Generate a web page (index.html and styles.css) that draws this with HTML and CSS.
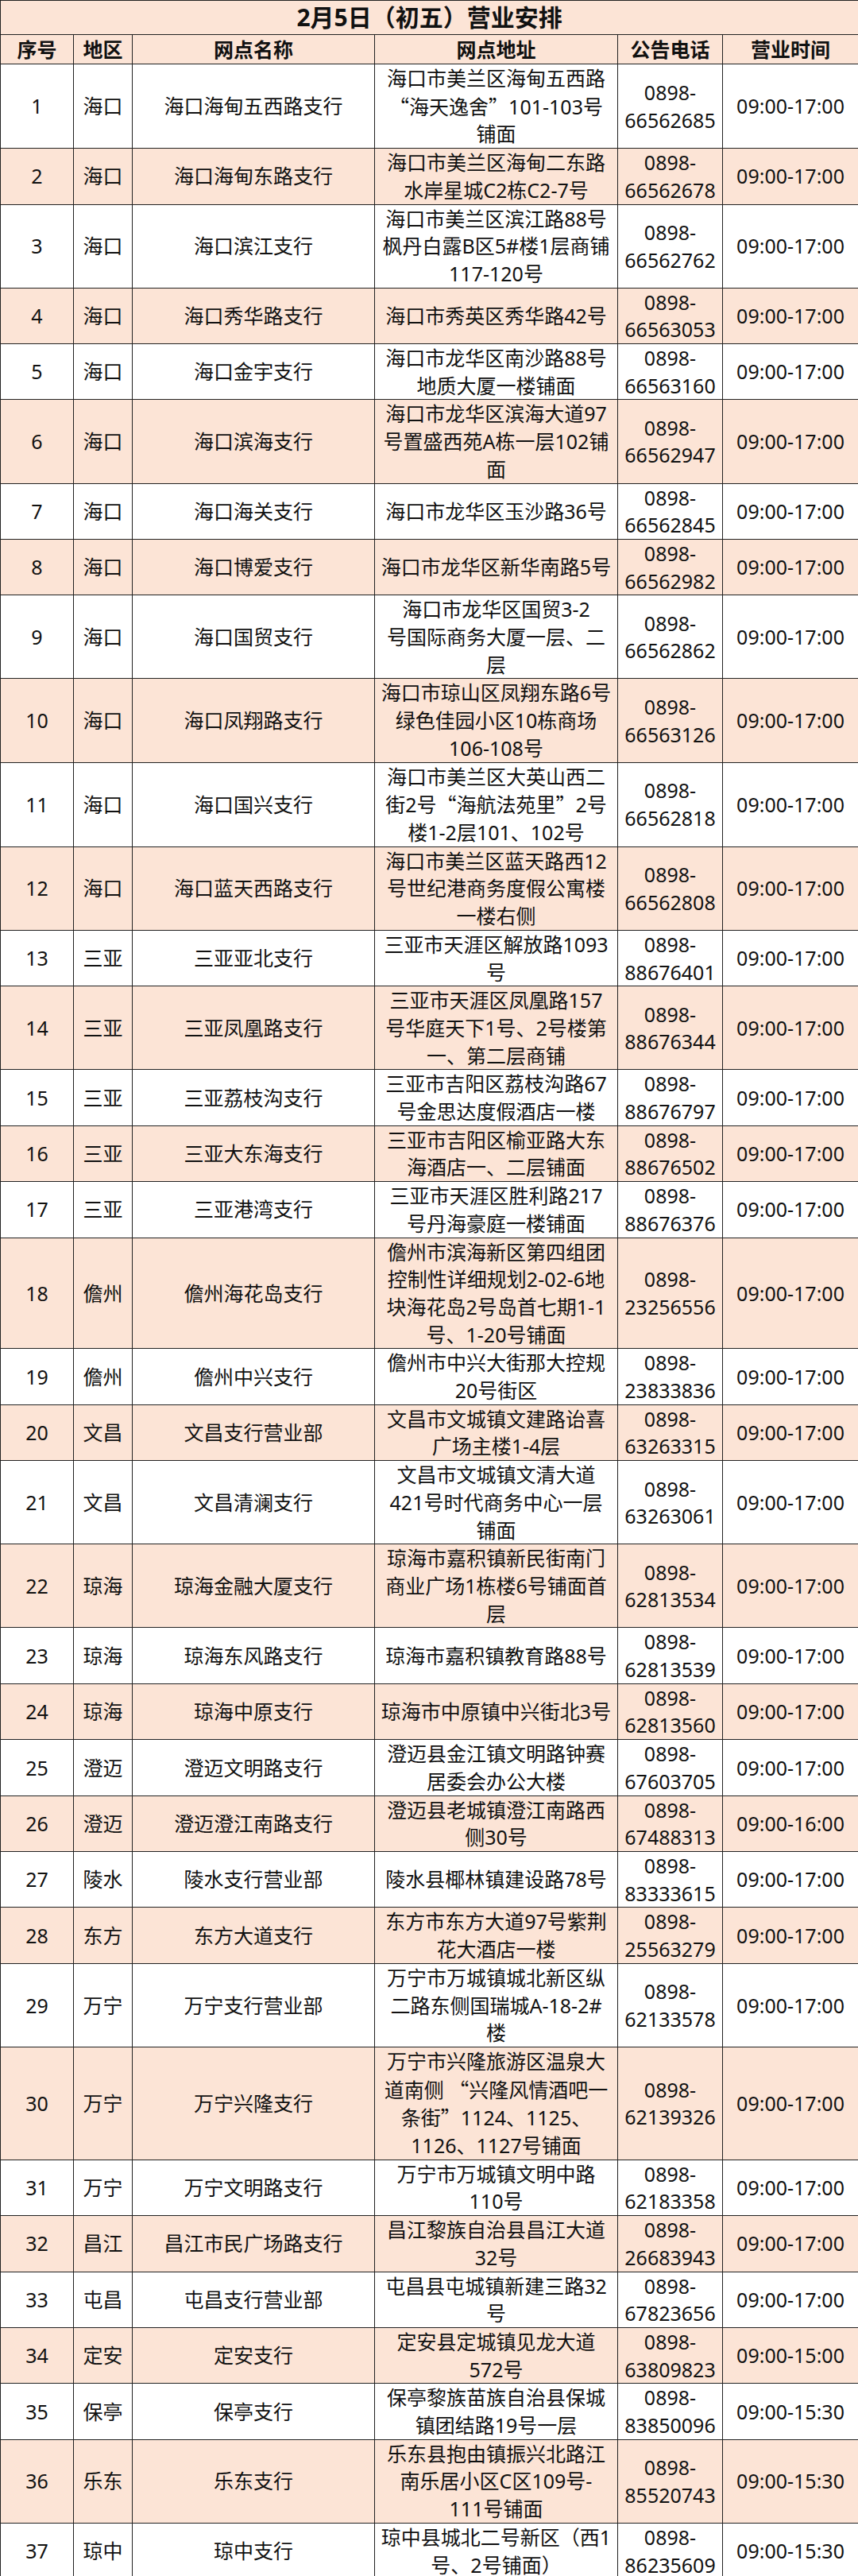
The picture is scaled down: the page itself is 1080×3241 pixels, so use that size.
FILE: index.html
```html
<!DOCTYPE html>
<html lang="zh-CN">
<head>
<meta charset="utf-8">
<title>2月5日（初五）营业安排</title>
<link rel="stylesheet" href="styles.css">
</head>
<body>
<table class="sched">
<colgroup>
<col class="c-no"><col class="c-area"><col class="c-name"><col class="c-addr"><col class="c-tel"><col class="c-time">
</colgroup>
<thead>
<tr class="title"><th colspan="6">2月5日（初五）营业安排</th></tr>
<tr class="head"><th>序号</th><th>地区</th><th>网点名称</th><th>网点地址</th><th>公告电话</th><th>营业时间</th></tr>
</thead>
<tbody>
<tr><td>1</td><td>海口</td><td>海口海甸五西路支行</td><td class="addr">海口市美兰区海甸五西路<br><span class="cjk">“</span>海天逸舍<span class="cjk">”</span>101-103号<br>铺面</td><td class="tel">0898-<br>66562685</td><td class="time">09:00-17:00</td></tr>
<tr class="alt"><td>2</td><td>海口</td><td>海口海甸东路支行</td><td class="addr">海口市美兰区海甸二东路<br>水岸星城C2栋C2-7号</td><td class="tel">0898-<br>66562678</td><td class="time">09:00-17:00</td></tr>
<tr><td>3</td><td>海口</td><td>海口滨江支行</td><td class="addr">海口市美兰区滨江路88号<br>枫丹白露B区5#楼1层商铺<br>117-120号</td><td class="tel">0898-<br>66562762</td><td class="time">09:00-17:00</td></tr>
<tr class="alt"><td>4</td><td>海口</td><td>海口秀华路支行</td><td class="addr">海口市秀英区秀华路42号</td><td class="tel">0898-<br>66563053</td><td class="time">09:00-17:00</td></tr>
<tr><td>5</td><td>海口</td><td>海口金宇支行</td><td class="addr">海口市龙华区南沙路88号<br>地质大厦一楼铺面</td><td class="tel">0898-<br>66563160</td><td class="time">09:00-17:00</td></tr>
<tr class="alt"><td>6</td><td>海口</td><td>海口滨海支行</td><td class="addr">海口市龙华区滨海大道97<br>号置盛西苑A栋一层102铺<br>面</td><td class="tel">0898-<br>66562947</td><td class="time">09:00-17:00</td></tr>
<tr><td>7</td><td>海口</td><td>海口海关支行</td><td class="addr">海口市龙华区玉沙路36号</td><td class="tel">0898-<br>66562845</td><td class="time">09:00-17:00</td></tr>
<tr class="alt"><td>8</td><td>海口</td><td>海口博爱支行</td><td class="addr">海口市龙华区新华南路5号</td><td class="tel">0898-<br>66562982</td><td class="time">09:00-17:00</td></tr>
<tr><td>9</td><td>海口</td><td>海口国贸支行</td><td class="addr">海口市龙华区国贸3-2<br>号国际商务大厦一层、二<br>层</td><td class="tel">0898-<br>66562862</td><td class="time">09:00-17:00</td></tr>
<tr class="alt"><td>10</td><td>海口</td><td>海口凤翔路支行</td><td class="addr">海口市琼山区凤翔东路6号<br>绿色佳园小区10栋商场<br>106-108号</td><td class="tel">0898-<br>66563126</td><td class="time">09:00-17:00</td></tr>
<tr><td>11</td><td>海口</td><td>海口国兴支行</td><td class="addr">海口市美兰区大英山西二<br>街2号<span class="cjk">“</span>海航法苑里<span class="cjk">”</span>2号<br>楼1-2层101、102号</td><td class="tel">0898-<br>66562818</td><td class="time">09:00-17:00</td></tr>
<tr class="alt"><td>12</td><td>海口</td><td>海口蓝天西路支行</td><td class="addr">海口市美兰区蓝天路西12<br>号世纪港商务度假公寓楼<br>一楼右侧</td><td class="tel">0898-<br>66562808</td><td class="time">09:00-17:00</td></tr>
<tr><td>13</td><td>三亚</td><td>三亚亚北支行</td><td class="addr">三亚市天涯区解放路1093<br>号</td><td class="tel">0898-<br>88676401</td><td class="time">09:00-17:00</td></tr>
<tr class="alt"><td>14</td><td>三亚</td><td>三亚凤凰路支行</td><td class="addr">三亚市天涯区凤凰路157<br>号华庭天下1号、2号楼第<br>一、第二层商铺</td><td class="tel">0898-<br>88676344</td><td class="time">09:00-17:00</td></tr>
<tr><td>15</td><td>三亚</td><td>三亚荔枝沟支行</td><td class="addr">三亚市吉阳区荔枝沟路67<br>号金思达度假酒店一楼</td><td class="tel">0898-<br>88676797</td><td class="time">09:00-17:00</td></tr>
<tr class="alt"><td>16</td><td>三亚</td><td>三亚大东海支行</td><td class="addr">三亚市吉阳区榆亚路大东<br>海酒店一、二层铺面</td><td class="tel">0898-<br>88676502</td><td class="time">09:00-17:00</td></tr>
<tr><td>17</td><td>三亚</td><td>三亚港湾支行</td><td class="addr">三亚市天涯区胜利路217<br>号丹海豪庭一楼铺面</td><td class="tel">0898-<br>88676376</td><td class="time">09:00-17:00</td></tr>
<tr class="alt"><td>18</td><td>儋州</td><td>儋州海花岛支行</td><td class="addr">儋州市滨海新区第四组团<br>控制性详细规划2-02-6地<br>块海花岛2号岛首七期1-1<br>号、1-20号铺面</td><td class="tel">0898-<br>23256556</td><td class="time">09:00-17:00</td></tr>
<tr><td>19</td><td>儋州</td><td>儋州中兴支行</td><td class="addr">儋州市中兴大街那大控规<br>20号街区</td><td class="tel">0898-<br>23833836</td><td class="time">09:00-17:00</td></tr>
<tr class="alt"><td>20</td><td>文昌</td><td>文昌支行营业部</td><td class="addr">文昌市文城镇文建路诒喜<br>广场主楼1-4层</td><td class="tel">0898-<br>63263315</td><td class="time">09:00-17:00</td></tr>
<tr><td>21</td><td>文昌</td><td>文昌清澜支行</td><td class="addr">文昌市文城镇文清大道<br>421号时代商务中心一层<br>铺面</td><td class="tel">0898-<br>63263061</td><td class="time">09:00-17:00</td></tr>
<tr class="alt"><td>22</td><td>琼海</td><td>琼海金融大厦支行</td><td class="addr">琼海市嘉积镇新民街南门<br>商业广场1栋楼6号铺面首<br>层</td><td class="tel">0898-<br>62813534</td><td class="time">09:00-17:00</td></tr>
<tr><td>23</td><td>琼海</td><td>琼海东风路支行</td><td class="addr">琼海市嘉积镇教育路88号</td><td class="tel">0898-<br>62813539</td><td class="time">09:00-17:00</td></tr>
<tr class="alt"><td>24</td><td>琼海</td><td>琼海中原支行</td><td class="addr">琼海市中原镇中兴街北3号</td><td class="tel">0898-<br>62813560</td><td class="time">09:00-17:00</td></tr>
<tr><td>25</td><td>澄迈</td><td>澄迈文明路支行</td><td class="addr">澄迈县金江镇文明路钟赛<br>居委会办公大楼</td><td class="tel">0898-<br>67603705</td><td class="time">09:00-17:00</td></tr>
<tr class="alt"><td>26</td><td>澄迈</td><td>澄迈澄江南路支行</td><td class="addr">澄迈县老城镇澄江南路西<br>侧30号</td><td class="tel">0898-<br>67488313</td><td class="time">09:00-16:00</td></tr>
<tr><td>27</td><td>陵水</td><td>陵水支行营业部</td><td class="addr">陵水县椰林镇建设路78号</td><td class="tel">0898-<br>83333615</td><td class="time">09:00-17:00</td></tr>
<tr class="alt"><td>28</td><td>东方</td><td>东方大道支行</td><td class="addr">东方市东方大道97号紫荆<br>花大酒店一楼</td><td class="tel">0898-<br>25563279</td><td class="time">09:00-17:00</td></tr>
<tr><td>29</td><td>万宁</td><td>万宁支行营业部</td><td class="addr">万宁市万城镇城北新区纵<br>二路东侧国瑞城A-18-2#<br>楼</td><td class="tel">0898-<br>62133578</td><td class="time">09:00-17:00</td></tr>
<tr class="alt"><td>30</td><td>万宁</td><td>万宁兴隆支行</td><td class="addr">万宁市兴隆旅游区温泉大<br>道南侧 <span class="cjk">“</span>兴隆风情酒吧一<br>条街<span class="cjk">”</span>1124、1125、<br>1126、1127号铺面</td><td class="tel">0898-<br>62139326</td><td class="time">09:00-17:00</td></tr>
<tr><td>31</td><td>万宁</td><td>万宁文明路支行</td><td class="addr">万宁市万城镇文明中路<br>110号</td><td class="tel">0898-<br>62183358</td><td class="time">09:00-17:00</td></tr>
<tr class="alt"><td>32</td><td>昌江</td><td>昌江市民广场路支行</td><td class="addr">昌江黎族自治县昌江大道<br>32号</td><td class="tel">0898-<br>26683943</td><td class="time">09:00-17:00</td></tr>
<tr><td>33</td><td>屯昌</td><td>屯昌支行营业部</td><td class="addr">屯昌县屯城镇新建三路32<br>号</td><td class="tel">0898-<br>67823656</td><td class="time">09:00-17:00</td></tr>
<tr class="alt"><td>34</td><td>定安</td><td>定安支行</td><td class="addr">定安县定城镇见龙大道<br>572号</td><td class="tel">0898-<br>63809823</td><td class="time">09:00-15:00</td></tr>
<tr><td>35</td><td>保亭</td><td>保亭支行</td><td class="addr">保亭黎族苗族自治县保城<br>镇团结路19号一层</td><td class="tel">0898-<br>83850096</td><td class="time">09:00-15:30</td></tr>
<tr class="alt"><td>36</td><td>乐东</td><td>乐东支行</td><td class="addr">乐东县抱由镇振兴北路江<br>南乐居小区C区109号-<br>111号铺面</td><td class="tel">0898-<br>85520743</td><td class="time">09:00-15:30</td></tr>
<tr><td>37</td><td>琼中</td><td>琼中支行</td><td class="addr">琼中县城北二号新区（西1<br>号、2号铺面）</td><td class="tel">0898-<br>86235609</td><td class="time">09:00-15:30</td></tr>
</tbody>
</table>
</body>
</html>
```
FILE: styles.css
```css
html, body {
  margin: 0;
  padding: 0;
  background: #ffffff;
}

.sched {
  width: 1080px;
  table-layout: fixed;
  border-collapse: collapse;
  font-family: "Noto Sans", "Noto Sans CJK SC", sans-serif;
  font-size: 25px;
  color: #111111;
}

.c-no { width: 92px; }
.c-area { width: 74px; }
.c-name { width: 305px; }
.c-addr { width: 306px; }
.c-tel { width: 132px; }
.c-time { width: 171px; }

.sched th,
.sched td {
  border: 1px solid #222222;
  padding: 0;
  text-align: center;
  vertical-align: middle;
  line-height: 34.7px;
  white-space: nowrap;
  overflow: hidden;
}

.sched .title th {
  height: 42px;
  font-size: 30px;
  font-weight: 700;
  line-height: 42px;
  background: #fce4d6;
}

.sched .head th {
  height: 36px;
  font-weight: 700;
  line-height: 36px;
  background: #fce4d6;
}

.sched tr.alt td {
  background: #fce4d6;
}

.cjk {
  font-family: "Noto Sans CJK SC", sans-serif;
}
```
